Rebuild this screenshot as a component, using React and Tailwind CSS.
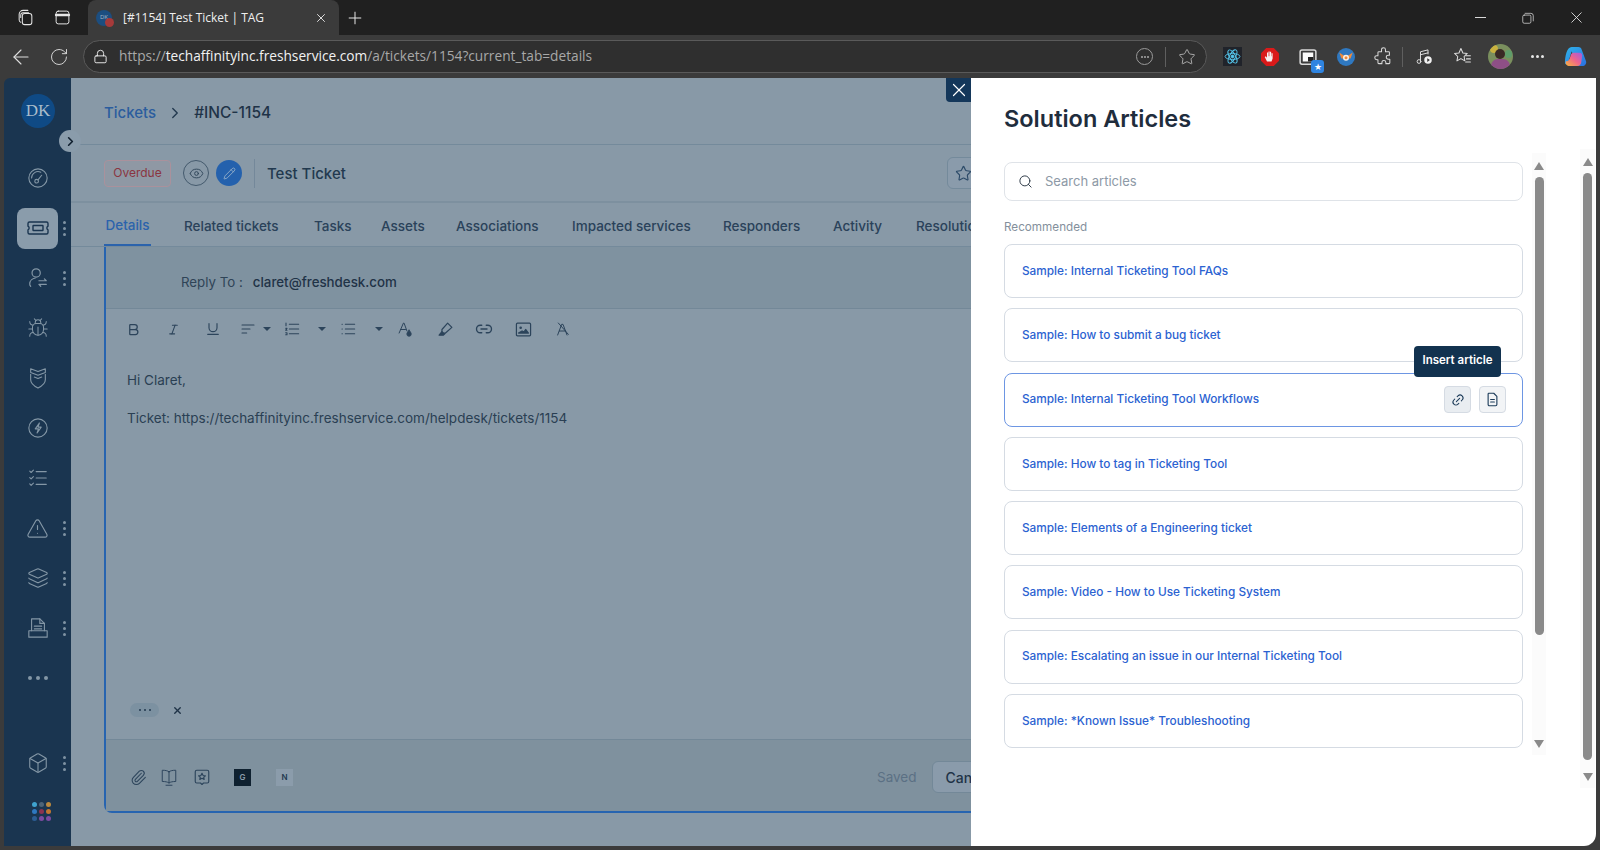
import React from "react";
import { Bug, TriangleAlert, Layers, Box, Paperclip, Search, X, Star, Plus, ArrowLeft, RotateCw, Lock, ChevronRight, Eye, Pencil, Link2, Italic, Bold, Underline } from "lucide-react";

const S = ({ size = 24, sw = 1.5, className = "", vb = "0 0 24 24", children }) => (
  <svg width={size} height={size} viewBox={vb} fill="none" stroke="currentColor" strokeWidth={sw} strokeLinecap="round" strokeLinejoin="round" className={className}>{children}</svg>
);

const Kebab = () => (
  <div className="ml-[4px] flex w-[4px] flex-col items-center gap-[3px]">
    <span className="h-[3px] w-[3px] rounded-full bg-[#7f93a3]" />
    <span className="h-[3px] w-[3px] rounded-full bg-[#7f93a3]" />
    <span className="h-[3px] w-[3px] rounded-full bg-[#7f93a3]" />
  </div>
);

const Rail = ({ children, kebab, active }) => (
  <div className="flex h-[50px] items-center pl-[13px]">
    <div className={"flex h-[41px] w-[41px] items-center justify-center rounded-lg " + (active ? "bg-[#8a9cab] text-[#1a3550]" : "text-[#8497a6]")}>{children}</div>
    {kebab && <Kebab />}
  </div>
);

const sidebar = [
  { icon: <S size={22} sw={1.2}><circle cx="12" cy="12" r="10" /><path d="M5 12a7 7 0 0 1 10-6.300" /><circle cx="10.500" cy="15.500" r="2" /><path d="M12 14l4-5" /></S> },
  { active: true, kebab: true, icon: <S size={24} sw={1.4}><path d="M3.500 6h17a1.500 1.500 0 0 1 1.500 1.500v2.700a2 2 0 0 0 0 3.600v2.700a1.500 1.500 0 0 1-1.500 1.500h-17A1.500 1.500 0 0 1 2 16.500v-2.700a2 2 0 0 0 0-3.600V7.500A1.500 1.500 0 0 1 3.500 6z" /><rect x="7" y="9.500" width="10" height="5" rx="0.500" /></S> },
  { kebab: true, icon: <S size={22} sw={1.3}><circle cx="10" cy="6.500" r="4.500" /><path d="M4 21a3 3 0 0 1-1-2.500c0-3.500 3-6 6-6.500" /><path d="M13 15h8l-2-2M21 19h-8l2 2" /></S> },
  { icon: <Bug size={22} strokeWidth={1.1} /> },
  { icon: <S size={22} sw={1.2}><path d="M4 2l8 3 8-3v4l-8 3-8-3z" /><path d="M4 8v6c0 4 4 7 8 9 4-2 8-5 8-9V8" /><path d="M8 11l4 1.500 4-1.500" /></S> },
  { icon: <S size={22} sw={1.2}><circle cx="12" cy="12" r="10" /><path d="M13.500 6.500L9 13h3.500l-1.500 4.500 4.500-6.500H12z" /></S> },
  { icon: <S size={22} sw={1.2}><path d="M3 4.500l1.500 1.500L7 3.500M3 11.500L4.500 13 7 10.500M3 18.500L4.500 20 7 17.500M10 5h11M10 12h11M10 19h11" /></S> },
  { kebab: true, icon: <TriangleAlert size={23} strokeWidth={1.2} /> },
  { kebab: true, icon: <Layers size={22} strokeWidth={1.2} /> },
  { kebab: true, icon: <S size={22} sw={1.2}><path d="M5 15V2h9l5 5v8" /><path d="M14 2v5h5" /><path d="M8 10h8M8 13h8" /><path d="M2 15h20v7H2z" /></S> },
];

const GridDots = () => (
  <div className="grid grid-cols-3 gap-[2px]">
    {["#3fa3cf", "#4d6478", "#b9883f", "#2f78c0", "#8b3350", "#c2762f", "#2c5d93", "#7b4ba0", "#7b4ba0"].map((c, i) => (
      <span key={i} className="h-[5px] w-[5px] rounded-full" style={{ backgroundColor: c }} />
    ))}
  </div>
);

const Sidebar = () => (
  <aside className="flex w-[67px] shrink-0 flex-col rounded-tl-md bg-[#1a3550]">
    <div className="ml-[17px] mt-[16px] flex h-[34px] w-[34px] items-center justify-center rounded-full bg-[#0f4a85] text-[17px] text-[#a9bccb] font-['Liberation_Serif',serif]">DK</div>
    <div className="mt-[25px] flex flex-col">
      {sidebar.map((it, i) => <Rail key={i} active={it.active} kebab={it.kebab}>{it.icon}</Rail>)}
      <div className="flex h-[50px] items-center justify-center gap-[4px]">
        <span className="h-[4px] w-[4px] rounded-full bg-[#8497a6]" />
        <span className="h-[4px] w-[4px] rounded-full bg-[#8497a6]" />
        <span className="h-[4px] w-[4px] rounded-full bg-[#8497a6]" />
      </div>
    </div>
    <div className="mt-[35px]"><Rail kebab><Box size={22} strokeWidth={1.2} /></Rail></div>
    <div className="flex h-[46px] items-center pl-[28px]"><GridDots /></div>
  </aside>
);

const Caret = () => <span className="h-0 w-0 border-x-[4px] border-t-[4px] border-x-transparent border-t-[#2c445b]" />;

const Toolbar = () => (
  <div className="flex h-[40px] items-center pl-[7px] text-[#2c445b]">
    <div className="flex w-[40px] justify-center"><Bold size={15} strokeWidth={2} /></div>
    <div className="flex w-[40px] justify-center"><Italic size={13} strokeWidth={2} /></div>
    <div className="flex w-[40px] justify-center"><Underline size={16} strokeWidth={1.7} /></div>
    <div className="flex w-[29px] justify-center"><S size={16} sw={1.6}><path d="M3 6h18M3 12h12M3 18h7" /></S></div>
    <div className="flex w-[10px] justify-center"><Caret /></div>
    <div className="flex w-[40px] justify-center"><S size={16} sw={1.6}><path d="M8 5h14M8 12h14M8 19h14M3 3v4M2.500 11h2l-2 3h2M2.500 17.500h2v3h-2" /></S></div>
    <div className="ml-[5px] flex w-[10px] justify-center"><Caret /></div>
    <div className="ml-[6px] flex w-[30px] justify-center"><S size={16} sw={1.6}><path d="M8 5h14M8 12h14M8 19h14M3 5h.5M3 12h.5M3 19h.5" /></S></div>
    <div className="ml-[11px] flex w-[10px] justify-center"><Caret /></div>
    <div className="ml-[1px] flex w-[40px] justify-center"><S size={17} sw={1.4}><path d="M3 17L9 3h1l4 11" /><path d="M5 12h7" /><path d="M17 13c1.500 2 3 3.500 3 5.500a3 3 0 0 1-6 0c0-2 1.500-3.500 3-5.500z" fill="currentColor" /></S></div>
    <div className="flex w-[40px] justify-center"><S size={17} sw={1.7}><path d="M15 3l6 6-9 8H9l-2-2v-3z" /><path d="M7 15l-4 5h6l2-2" fill="currentColor" /></S></div>
    <div className="flex w-[38px] justify-center"><Link2 size={18} strokeWidth={1.8} /></div>
    <div className="flex w-[40px] justify-center"><S size={17} sw={1.7}><rect x="2" y="3" width="20" height="18" rx="1.500" /><circle cx="8" cy="9.500" r="1" /><path d="M5 17l5-3 2.500 1.500L15 12l4 5z" fill="currentColor" /></S></div>
    <div className="flex w-[40px] justify-center"><S size={16} sw={1.5}><path d="M4 21L10 5h2l6 16M6.500 15h9M5 3l15 17" /></S></div>
  </div>
);

const tabs = [
  ["Details", "w-[80px] text-[#2b63ac]"],
  ["Related tickets", "w-[130px]"],
  ["Tasks", "w-[67px]"],
  ["Assets", "w-[75px]"],
  ["Associations", "w-[116px]"],
  ["Impacted services", "w-[151px]"],
  ["Responders", "w-[110px]"],
  ["Activity", "w-[83px]"],
  ["Resolution", "w-[90px]"],
];

const Main = () => (
  <main className="relative h-full w-[900px] shrink-0 bg-[#8899a7] text-[#22394f]">
    <div className="absolute left-[-12px] top-[52px] z-10 flex h-[22px] w-[22px] items-center justify-center rounded-full bg-[#8a9cab] text-[#101f2e]"><ChevronRight size={15} strokeWidth={2.6} /></div>
    <div className="h-full overflow-hidden">
      <div className="flex h-[67px] items-center border-b border-[#748a9b] pl-[33px] pt-[4px] text-[15px] font-medium">
        <span className="text-[#2b5d9e]">Tickets</span>
        <ChevronRight size={18} strokeWidth={1.8} className="ml-[10px]" />
        <span className="ml-[10px] text-[15.500px] text-[#1f3347]">#INC-1154</span>
      </div>
      <div className="flex h-[58px] items-center border-b-2 border-[#7d909f] pl-[33px]">
        <span className="flex h-[27px] w-[67px] items-center justify-center rounded-sm border border-[#aa919c] bg-[#8f98a4] text-[12px] text-[#8a3541]">Overdue</span>
        <span className="ml-[12px] flex h-[26px] w-[26px] items-center justify-center rounded-full border border-[#445a6d] text-[#2e4458]"><Eye size={15} strokeWidth={1.5} /></span>
        <span className="ml-[7px] flex h-[26px] w-[26px] items-center justify-center rounded-full bg-[#2461ad] text-[#9fb6cc]"><Pencil size={13} strokeWidth={1.5} /></span>
        <span className="ml-[12px] h-[29px] w-px bg-[#74889a]" />
        <span className="ml-[12px] pt-[2px] text-[15px] font-medium text-[#22394f]">Test Ticket</span>
        <span className="ml-auto mr-[-30px] flex h-[32px] w-[54px] items-center rounded-md border border-[#748a9b] bg-[#8a9bab] pl-[7px] text-[#2c4a68]"><Star size={17} strokeWidth={1.6} /></span>
      </div>
      <div className="flex h-[44px] whitespace-nowrap border-b border-[#748a9b] pl-[33px] text-[13.500px] font-medium text-[#2a425a]">
        {tabs.map(([t, c], i) => (
          <div key={t} className={"flex h-full shrink-0 items-center " + c}>
            {i === 0 ? <span className="flex h-full w-[47px] items-center justify-center border-b-2 border-[#2b63ac] pt-[3px]">{t}</span> : <span className="pt-[3px]">{t}</span>}
          </div>
        ))}
      </div>
      <div className="ml-[33px] flex h-[566px] flex-col rounded-bl-lg border-b-2 border-l-2 border-[#2764b0]">
        <div className="flex h-[62px] items-center border-b border-[#738898] bg-[#7f92a0] pl-[75px] pt-[10px] text-[13.300px]">
          <span className="text-[#2f4457]">Reply To :</span>
          <span className="ml-[10px] font-medium text-[#1f3347]">claret@freshdesk.com</span>
        </div>
        <Toolbar />
        <div className="flex flex-1 flex-col pl-[21px] pt-[21px] text-[13.500px] leading-[20px] text-[#2a3f53]">
          <p>Hi Claret,</p>
          <p className="mt-[18px]">Ticket: https://techaffinityinc.freshservice.com/helpdesk/tickets/1154</p>
          <div className="mb-[22px] ml-[3px] mt-auto flex items-center">
            <span className="flex h-[14px] w-[29px] items-center justify-center gap-[3px] rounded-full bg-[#7c91a1]">
              <span className="h-[2px] w-[2px] rounded-full bg-[#22394f]" /><span className="h-[2px] w-[2px] rounded-full bg-[#22394f]" /><span className="h-[2px] w-[2px] rounded-full bg-[#22394f]" />
            </span>
            <X size={11} strokeWidth={3} className="ml-[13px] text-[#1f3347]" />
          </div>
        </div>
        <div className="flex h-[72px] shrink-0 items-center border-t border-[#738898] bg-[#7f919e] pl-[24px] pt-[3px] text-[#2c445b]">
          <Paperclip size={17} strokeWidth={1.5} className="shrink-0" />
          <div className="ml-[12px] flex w-[20px] shrink-0 justify-center"><S size={18} sw={1.3}><path d="M12 5c-2-1.500-5-2-9-2v15c4 0 7 .5 9 2 2-1.500 5-2 9-2V3c-4 0-7 .5-9 2zM12 5v15M8 23h8" /></S></div>
          <div className="ml-[13px] flex w-[20px] shrink-0 justify-center"><S size={18} sw={1.5}><path d="M5 3h14a2 2 0 0 1 2 2v13a2 2 0 0 1-2 2h-5l-2 2-2-2H5a2 2 0 0 1-2-2V5a2 2 0 0 1 2-2z" /><path d="M12 7l1.500 3 3 .3-2.200 2 .6 3-2.900-1.500-2.900 1.500.6-3-2.200-2 3-.3z" /></S></div>
          <span className="ml-[22px] flex h-[17px] w-[17px] shrink-0 items-center justify-center bg-[#0f2130] text-[8px] font-semibold text-[#8a9cab]">G</span>
          <span className="ml-[25px] flex h-[17px] w-[17px] shrink-0 items-center justify-center bg-[#8b9cab] text-[8px] font-semibold text-[#22394f]">N</span>
          <span className="ml-[584px] shrink-0 text-[13.500px] text-[#5b7084]">Saved</span>
          <span className="ml-[15px] flex h-[32px] w-[80px] shrink-0 items-center rounded-md border border-[#738898] bg-[#8a9bab] pl-[13px] text-[14px] font-medium text-[#1f3347]">Cancel</span>
        </div>
      </div>
    </div>
  </main>
);

const articles = [
  "Sample: Internal Ticketing Tool FAQs",
  "Sample: How to submit a bug ticket",
  "Sample: Internal Ticketing Tool Workflows",
  "Sample: How to tag in Ticketing Tool",
  "Sample: Elements of a Engineering ticket",
  "Sample: Video - How to Use Ticketing System",
  "Sample: Escalating an issue in our Internal Ticketing Tool",
  "Sample: *Known Issue* Troubleshooting",
];

const Up = () => <span className="h-0 w-0 border-x-[5.500px] border-b-[8px] border-x-transparent border-b-[#8a8a8a]" />;
const Down = () => <span className="h-0 w-0 border-x-[5.500px] border-t-[8px] border-x-transparent border-t-[#8a8a8a]" />;

const Panel = () => (
  <section className="relative flex-1 rounded-br-xl bg-white pl-[33px]">
    <button className="absolute left-[-25px] top-0 flex h-[24px] w-[25px] items-center justify-center rounded-bl-sm bg-[#14375a] text-white"><X size={22} strokeWidth={1.3} /></button>
    <h1 className="pt-[25px] text-[23.500px] font-semibold leading-[32px] text-[#1f2d3d]">Solution Articles</h1>
    <div className="mt-[14px] flex items-start">
      <div className="w-[519px] pt-[13px]">
        <div className="flex h-[39px] items-center rounded-lg border border-[#dfe3e8] pl-[13px]">
          <Search size={15} strokeWidth={1.6} className="text-[#333f4c]" />
          <span className="ml-[12px] text-[13px] text-[#8d99a6]">Search articles</span>
        </div>
        <div className="mt-[18px] text-[11.700px] leading-[16px] text-[#84909c]">Recommended</div>
        <div className="mt-[9px] flex flex-col gap-[10.300px]">
          {articles.map((a, i) => (
            <div key={a} className={"relative flex h-[54px] items-center justify-between rounded-lg border pl-[17px] pr-[16px] " + (i === 2 ? "border-[#6d96e3]" : "border-[#d5dbe3]")}>
              <span className="pt-[1px] text-[11.800px] font-medium text-[#2b62d1]">{a}</span>
              {i === 2 && (
                <>
                  <div className="flex gap-[8px]">
                    <span className="flex h-[27px] w-[27px] items-center justify-center rounded border border-[#d5dbe3] bg-[#e9edf1] text-[#1d3c5a]"><Link2 size={14} strokeWidth={1.8} className="-rotate-45" /></span>
                    <span className="flex h-[27px] w-[27px] items-center justify-center rounded border border-[#d5dbe3] bg-[#f2f4f6] text-[#1d3c5a]"><S size={15} sw={1.8}><path d="M6 2h8l5 5v13a2 2 0 0 1-2 2H7a2 2 0 0 1-2-2V3a1 1 0 0 1 1-1zM9 12h6M9 16h6" /></S></span>
                  </div>
                  <div className="absolute right-[21px] top-[-28px] z-10 flex h-[31px] w-[87px] items-center justify-center rounded bg-[#12324f] text-[11.500px] font-semibold text-white">Insert article</div>
                </>
              )}
            </div>
          ))}
        </div>
      </div>
      <div className="ml-[9px] mt-[4px] flex h-[602px] w-[14px] flex-col items-center bg-[#fbfbfb] pb-[7px] pt-[9px]">
        <Up />
        <span className="mt-[7px] h-[458px] w-[9px] rounded-full bg-[#8a8a8a]" />
        <span className="mt-auto" /><Down />
      </div>
      <div className="ml-[34px] flex h-[639px] w-[15px] flex-col items-center bg-[#fbfbfb] pb-[7px] pt-[9px]">
        <Up />
        <span className="mt-[7px] h-[587px] w-[9px] rounded-full bg-[#8a8a8a]" />
        <span className="mt-auto" /><Down />
      </div>
    </div>
  </section>
);

const TabStrip = () => (
  <div className="flex h-[35px] items-center bg-[#202020] text-[#e6e6e6]">
    <div className="flex w-[50px] justify-center pl-[1px]"><S size={19} sw={1.3}><rect x="8" y="7" width="12" height="14" rx="3" /><path d="M6 18a3 3 0 0 1-2-3V8a5 5 0 0 1 5-5h6" /><path d="M6 12V9a3 3 0 0 1 3-3h7" /></S></div>
    <div className="flex w-[24px] justify-center"><S size={17} sw={1.4}><rect x="3" y="3" width="18" height="18" rx="3" /><path d="M3 8.500h18" strokeWidth="3.500" /></S></div>
    <div className="ml-[14px] flex h-full w-[251px] items-center rounded-t-lg bg-[#3b3b3b] pl-[7px] pr-[11px] font-['Open_Sans',sans-serif]">
      <span className="relative ml-[1px] flex h-[16px] w-[16px] items-center justify-center rounded-full bg-[#1c4e80] text-[6px] text-[#a9bccb]">DK<span className="absolute bottom-[-1px] right-[-2px] h-[9px] w-[9px] rounded-full bg-[#a63a3a]" /></span>
      <span className="ml-[11px] text-[12px] text-[#eeeeee]">[#1154] Test Ticket | TAG</span>
      <X size={14} strokeWidth={1.6} className="ml-auto" />
    </div>
    <Plus size={20} strokeWidth={1.2} className="ml-[6px]" />
    <div className="ml-auto flex items-center text-[#e6e6e6]">
      <div className="flex w-[48px] justify-center"><span className="h-px w-[11px] bg-[#d8d8d8]" /></div>
      <div className="flex w-[48px] justify-center"><S size={14} sw={1.2}><rect x="3" y="7" width="14" height="14" rx="2.500" /><path d="M7 4h10a4 4 0 0 1 4 4v9" /></S></div>
      <div className="flex w-[48px] justify-center"><X size={19} strokeWidth={1.1} /></div>
    </div>
  </div>
);

const AddressBar = () => (
  <div className="flex h-[43px] items-center bg-[#3b3b3b] text-[#dedede] font-['Open_Sans',sans-serif]">
    <div className="flex w-[41px] justify-center"><ArrowLeft size={24} strokeWidth={1.1} /></div>
    <div className="flex w-[35px] justify-center"><RotateCw size={20} strokeWidth={1.1} /></div>
    <div className="ml-[7px] flex h-[33px] w-[1124px] items-center rounded-full border border-[#5a5a5a] bg-[#2f2f2f] pl-[9px]">
      <Lock size={15} strokeWidth={1.5} className="text-[#eeeeee]" />
      <span className="ml-[11px] whitespace-nowrap text-[13.700px] text-[#a8a8a8]">https://<span className="text-[#f2f2f2]">techaffinityinc.freshservice.com</span>/a/tickets/1154?current_tab=details</span>
      <div className="ml-auto flex items-center">
        <span className="flex h-[17px] w-[17px] items-center justify-center gap-[1px] rounded-full border border-[#9a9a9a]">
          <span className="h-[2px] w-[2px] rounded-full bg-[#aaaaaa]" /><span className="h-[2px] w-[2px] rounded-full bg-[#aaaaaa]" /><span className="h-[2px] w-[2px] rounded-full bg-[#aaaaaa]" />
        </span>
        <span className="ml-[12px] h-[20px] w-px bg-[#5f5f5f]" />
        <Star size={18} strokeWidth={1.2} className="ml-[12px] mr-[10px] text-[#b5b5b5]" />
      </div>
    </div>
    <div className="ml-[6px] flex items-center">
      <div className="flex w-[38px] justify-center">
        <span className="flex h-[19px] w-[19px] items-center justify-center bg-[#20232a] text-[#55c7ec]">
          <svg width="17" height="17" viewBox="-12 -12 24 24" fill="none" stroke="currentColor" strokeWidth="1.300"><ellipse rx="10.500" ry="4.200" /><ellipse rx="10.500" ry="4.200" transform="rotate(60)" /><ellipse rx="10.500" ry="4.200" transform="rotate(120)" /><circle r="2" fill="currentColor" /></svg>
        </span>
      </div>
      <div className="flex w-[38px] justify-center">
        <svg width="18" height="18" viewBox="0 0 24 24"><path d="M7 0h10l7 7v10l-7 7H7l-7-7V7z" fill="#d91a1a" /><path d="M8 18l-3-6 1.500-1 1.500 2V6h1.500v5h.5V4.500h1.500V11h.5V5h1.500v6h.5V7h1.500v7l-1.500 4z" fill="#f4f0f0" /></svg>
      </div>
      <div className="relative flex w-[38px] justify-center">
        <svg width="18" height="18" viewBox="0 0 24 24" fill="none"><rect x="1.500" y="2.500" width="21" height="19" rx="2.500" stroke="#d9d9d9" strokeWidth="2" /><rect x="5" y="6" width="14" height="12" fill="#fafafa" /><rect x="12" y="12" width="7" height="6" fill="#222222" /></svg>
        <span className="absolute bottom-[-7px] right-[3px] flex h-[13px] w-[13px] items-center justify-center rounded-[3px] bg-[#2f84e0] text-[9px] leading-none text-white">★</span>
      </div>
      <div className="flex w-[37px] justify-center">
        <svg width="18" height="18" viewBox="0 0 24 24"><circle cx="12" cy="12" r="12" fill="#2f78c0" /><path d="M3 6l6 4h6l6-4-3 8H6z" fill="#ee8a3a" /><circle cx="12" cy="13" r="4" fill="#f5f0e8" /><circle cx="12" cy="13" r="2" fill="#ee8a3a" /></svg>
      </div>
      <div className="flex w-[38px] justify-center">
        <S size={19} sw={1.3} className="text-[#d8d8d8]"><path d="M9.500 3.500a2.500 2.500 0 0 1 5 0V6h4a1 1 0 0 1 1 1v3.500h-1.500a2.500 2.500 0 0 0 0 5H20V20a1 1 0 0 1-1 1h-4v-1.500a2.500 2.500 0 0 0-5 0V21H6a1 1 0 0 1-1-1v-4H3.500a2.500 2.500 0 0 1 0-5H5V7a1 1 0 0 1 1-1h3.500z" /></S>
      </div>
      <span className="h-[20px] w-px bg-[#5f5f5f]" />
      <div className="flex w-[44px] justify-center">
        <S size={18} sw={1.3}><path d="M6 18V5l10-2.500V8" /><path d="M6 9l10-2.500" /><circle cx="4" cy="18" r="2.500" /><circle cx="16" cy="16" r="5" fill="#f0f0f0" stroke="none" /><path d="M15 13.500v5l3.500-2.500z" fill="#333333" stroke="none" /></S>
      </div>
      <div className="flex w-[30px] justify-center">
        <S size={19} sw={1.3}><path d="M10 2l2.500 5.500 5.500.6-4 3.900 1 5.500-5-2.800-5 2.800 1-5.500-4-3.900 5.500-.6z" /><path d="M16 11h6M17 15h5M16 19h6" /></S>
      </div>
      <div className="flex w-[46px] justify-center">
        <span className="relative h-[25px] w-[25px] overflow-hidden rounded-full bg-[#7a8f5e]">
          <span className="absolute left-[2px] top-[1px] h-[8px] w-[8px] rounded-full bg-[#c9b13f]" />
          <span className="absolute right-[1px] top-[6px] h-[8px] w-[7px] rounded-full bg-[#5f9d6a]" />
          <span className="absolute left-[7px] top-[5px] h-[10px] w-[10px] rounded-full bg-[#3a2a25]" />
          <span className="absolute bottom-[-4px] left-[3px] h-[14px] w-[19px] rounded-full bg-[#8e4f86]" />
        </span>
      </div>
      <div className="flex w-[28px] justify-center gap-[2px]">
        <span className="h-[3px] w-[3px] rounded-full bg-[#e6e6e6]" /><span className="h-[3px] w-[3px] rounded-full bg-[#e6e6e6]" /><span className="h-[3px] w-[3px] rounded-full bg-[#e6e6e6]" />
      </div>
      <div className="flex w-[49px] justify-center">
        <svg width="23" height="23" viewBox="0 0 24 24">
          <defs>
            <linearGradient id="cp1" x1="0" y1="0" x2="1" y2="1"><stop offset="0" stopColor="#2fb4e9" /><stop offset="1" stopColor="#2b6fe0" /></linearGradient>
            <linearGradient id="cp2" x1="0" y1="1" x2="1" y2="0"><stop offset="0" stopColor="#f6b73c" /><stop offset="0.500" stopColor="#f0648a" /><stop offset="1" stopColor="#a15be0" /></linearGradient>
          </defs>
          <path d="M8 2h7c2 0 3 1 3.500 3L23 17c.7 2.500-1 5-4 5h-3c-2 0-3-1-3.500-3L8 6.500 6 13l-2 6c-.5 1.500-3 1.500-3-.5C1 12 3 2 8 2z" fill="url(#cp1)" />
          <path d="M10 8h6c2 0 3 1 3 3l-1 7c-.3 2.500-2 4-4 4H6c-3 0-5-2-4-5 2 0 3-1 4-3l1-3c.5-2 1.500-3 3-3z" fill="url(#cp2)" />
        </svg>
      </div>
    </div>
  </div>
);

export default function App() {
  return (
    <div className="flex h-[850px] w-[1600px] flex-col overflow-hidden bg-[#3b3b3b] font-['Inter',sans-serif]">
      <TabStrip />
      <AddressBar />
      <div className="flex h-[768px] pl-[4px] pr-[4px]">
        <Sidebar />
        <Main />
        <Panel />
      </div>
    </div>
  );
}
